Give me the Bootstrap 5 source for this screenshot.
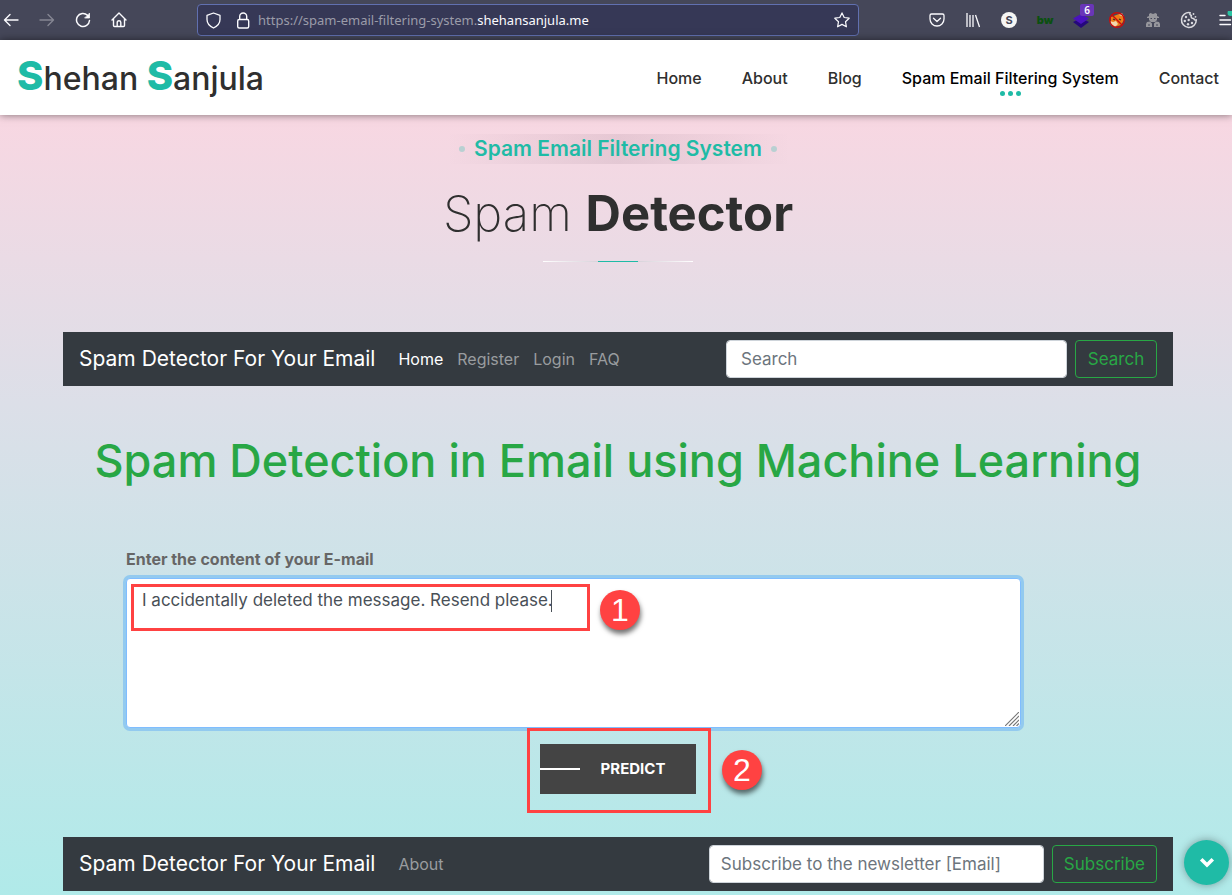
<!DOCTYPE html>
<html lang="en">
<head>
<meta charset="utf-8">
<meta name="viewport" content="width=device-width, initial-scale=1">
<title>Spam Email Filtering System</title>
<link href="https://cdn.jsdelivr.net/npm/bootstrap@5.3.0/dist/css/bootstrap.min.css" rel="stylesheet">
<style>
:root { --teal: #1fbba6; --ink: #2f2f2f; --bar: #343a40; --green: #28a745; --callout: #ff4242; }
body { font-family: Inter, "Liberation Sans", sans-serif; color: var(--ink); background: #b0eae9; overflow: hidden; }
button, input, textarea { font-family: inherit; }
a { text-decoration: none; }
.browser-bar { height: 40px; background: #454759; color: #fbfbfe; overflow: hidden; }
.browser-bar svg { display: block; flex: none; }
.tool-btn { background: none; border: 0; padding: 0; width: 36px; height: 32px; display: flex; align-items: center; justify-content: center; color: inherit; position: relative; flex: none; }
.nav-tools { width: 197px; margin-left: -7px; flex: none; }
.ext-tools { margin-right: -11px; flex: none; }
.address { width: 662px; height: 32px; margin-left: 7px; background: #363856; border: 1px solid #6170b0; border-radius: 4px; font: 13px/20px "Noto Sans", sans-serif; flex: 0 1 auto; }
.address a { color: #9b9ca9; white-space: nowrap; }
.address b { font-weight: 400; color: #fbfbfe; }
.tab-count { position: absolute; left: 17px; top: 0; width: 14px; height: 12px; border-radius: 2px; background: #6936b8; color: #fff; font: 600 10px/12px "Noto Sans", sans-serif; text-align: center; }
.site-header { position: relative; z-index: 2; height: 75px; background: #fff; box-shadow: 0 0 8px rgba(0,0,0,.5); padding: 0 13px 0 17px; }
.logo { font-size: 32px; font-weight: 500; line-height: 48px; color: var(--ink); white-space: nowrap; }
.logo b { font-size: 40px; font-weight: 800; color: var(--teal); }
.site-nav { gap: 40px; }
.site-nav a { color: var(--ink); font-size: 16px; font-weight: 500; line-height: 24px; position: relative; white-space: nowrap; }
.site-nav a.active { color: #000; }
.active-dots { position: absolute; left: 50%; bottom: -6px; margin-left: -10px; display: flex; gap: 3px; }
.active-dots i { width: 5px; height: 5px; border-radius: 50%; background: var(--teal); }
.page-main { min-height: calc(100vh - 115px); background: linear-gradient(#f8d7e2, #dcdfe8 37%, #b0eae9); padding: 19px 0 4px 4px; }
.sheet { max-width: 1110px; margin: 0 auto; }
.kicker { width: 345px; height: 30px; margin: 0 auto; color: var(--teal); font-size: 21px; font-weight: 600; line-height: 30px; background: linear-gradient(90deg, rgba(70,40,60,0), rgba(70,40,60,.09) 50%, rgba(70,40,60,0)); white-space: nowrap; gap: 9px; }
.kicker::before, .kicker::after { content: ""; width: 6px; height: 6px; border-radius: 50%; background: #b8d0d2; }
.hero-title { font-size: 49px; font-weight: 200; line-height: 56px; margin: 22px 0 19px; }
.hero-title b { font-weight: 700; }
.divider { width: 150px; height: 1px; margin: 0 auto 70px; background: linear-gradient(90deg, #fff, #d8d2da 55px, var(--teal) 55px, var(--teal) 95px, #d8d2da 95px, #fff); }
.detector-bar { background: var(--bar); padding: 8px 16px; min-height: 54px; }
.detector-bar .navbar-brand { color: #fff; font-size: 21px; line-height: 30px; padding: 4px 0; margin-right: 16px; }
.detector-bar .nav-link { color: #999c9f; font-size: 16px; line-height: 24px; padding: 7px; }
.detector-bar .nav-link.active { color: #fff; }
.detector-bar .form-control { height: 38px; font-size: 17px; line-height: 24px; padding: 6px 14px; border: 1px solid #ced4da; border-radius: 4px; }
.detector-bar .form-control::placeholder { color: #6c757d; }
.search-box { width: 341px; }
.mail-box { width: 335px; }
.detector-bar .mail-box { padding-left: 11px; }
.btn-go { min-width: 82px; height: 38px; border: 1px solid var(--green); border-radius: 4px; color: var(--green); font-size: 17px; line-height: 24px; padding: 6px 11px; }
.page-title { font-size: 45px; font-weight: 500; line-height: 54px; color: var(--green); margin: 48px 0 59px; white-space: nowrap; }
.mail-form { padding: 0 152px 0 63px; }
.mail-form label { font-size: 16px; font-weight: 700; line-height: 24px; color: #666; margin-bottom: 7px; display: block; }
.message-wrap { position: relative; }
.message { display: block; height: 150px; font-size: 17px; line-height: 24px; color: #495057; background: #fff; border: 1px solid #80bdff; border-radius: 4px; padding: 9px 15px; resize: none; box-shadow: 0 0 0 3px #93caef; }
.text-caret { position: absolute; left: 425px; top: 12px; width: 1px; height: 22px; background: #495057; }
.grip { position: absolute; right: 2px; bottom: 2px; }
.callout-box { position: absolute; border: 3px solid var(--callout); pointer-events: none; }
.callout-num { position: absolute; width: 40px; height: 40px; border-radius: 50%; background: var(--callout); color: #fff; font: 32px/40px "Liberation Sans", sans-serif; text-align: center; box-shadow: 1px 4px 5px rgba(0,0,0,.55); }
.box-text { left: 5px; top: 6px; width: 459px; height: 47px; }
.num-text { left: 474px; top: 12px; }
.predict-wrap { position: relative; width: 156px; margin: 16px auto 43px; }
.btn-predict { position: relative; width: 100%; height: 50px; border: 0; border-radius: 0; background: #444; color: #fff; font-size: 15px; font-weight: 700; padding: 0 0 0 30px; }
.btn-predict::before { content: ""; position: absolute; left: 0; top: 24px; width: 40px; height: 2px; background: #fff; }
.box-predict { left: -13px; top: -16px; width: 184px; height: 85px; }
.num-predict { left: 182px; top: 6px; }
.to-bottom { position: fixed; right: 3px; bottom: 10px; width: 45px; height: 45px; border: 0; border-radius: 50%; background: var(--teal); display: flex; align-items: center; justify-content: center; box-shadow: 0 0 8px rgba(0,0,0,.35); z-index: 3; padding: 0; }
</style>
</head>
<body>
<div class="browser-bar d-flex align-items-center">
  <div class="nav-tools d-flex">
    <button class="tool-btn" aria-label="Back"><svg width="16" height="16" viewBox="0 0 16 16" fill="none" stroke="currentColor" stroke-width="1.4" stroke-linecap="round" stroke-linejoin="round"><path d="M15 8H1.500M7 2.500 1.500 8 7 13.500"/></svg></button>
    <button class="tool-btn" aria-label="Forward"><svg width="16" height="16" viewBox="0 0 16 16" fill="none" stroke="#858692" stroke-width="1.400" stroke-linecap="round" stroke-linejoin="round"><path d="M1 8h13.500M9 2.500 14.500 8 9 13.500"/></svg></button>
    <button class="tool-btn" aria-label="Reload"><svg width="16" height="16" viewBox="0 0 16 16" fill="none" stroke="currentColor" stroke-width="1.500" stroke-linecap="round"><path d="M14.500 8.500A6.500 6.500 0 1 1 12.500 3.300"/><path d="M14.500 1.500v4.500H10z" fill="currentColor" stroke-width=".8" stroke-linejoin="round"/></svg></button>
    <button class="tool-btn" aria-label="Home"><svg width="16" height="16" viewBox="0 0 16 16" fill="none" stroke="currentColor" stroke-width="1.400" stroke-linecap="round" stroke-linejoin="round"><path d="M1 8 8 1l7 7M2.500 7v6.500a1 1 0 0 0 1 1h9a1 1 0 0 0 1-1V7M6.200 14v-3.500a1.800 1.800 0 0 1 3.600 0V14"/></svg></button>
  </div>
  <div class="address d-flex align-items-center">
    <svg class="ms-2" width="15" height="17" viewBox="0 0 15 17" fill="none" stroke="#fbfbfe" stroke-width="1.300" stroke-linejoin="round"><path d="M7.500 1 14 3.300v4.200c0 3.800-2.700 6.700-6.500 8.500C3.700 14.200 1 11.300 1 7.500V3.300z"/></svg>
    <svg class="ms-3" width="13" height="17" viewBox="2 0 13 17" fill="none" stroke="#fbfbfe" stroke-width="1.400"><rect x="2.700" y="7.500" width="11" height="8.500" rx="1.500"/><path d="M4.700 7.500V4.500a3.500 3.500 0 0 1 7 0v3"/></svg>
    <a class="ms-2" href="#">https://spam-email-filtering-system.<b>shehansanjula.me</b></a>
    <svg class="ms-auto me-2" width="16" height="16" viewBox="0 0 16 16" fill="none" stroke="#fbfbfe" stroke-width="1.200" stroke-linejoin="round"><path d="m8 .9 2.200 4.600 5 .7-3.700 3.500.9 5.100L8 12.400l-4.400 2.400.9-5.100L.8 6.200l5-.7z"/></svg>
  </div>
  <div class="ext-tools d-flex ms-auto">
    <button class="tool-btn" aria-label="Save to Pocket"><svg width="16" height="16" viewBox="0 0 16 16" fill="none" stroke="currentColor" stroke-width="1.300" stroke-linecap="round" stroke-linejoin="round"><path d="M2.500 2h11A1.500 1.500 0 0 1 15 3.500V7a7 7 0 0 1-14 0V3.500A1.500 1.500 0 0 1 2.500 2zM4.500 6.200 8 9.500l3.500-3.300"/></svg></button>
    <button class="tool-btn" aria-label="Library"><svg width="16" height="16" viewBox="0 0 16 16" stroke="currentColor" stroke-width="1.300"><path d="M2 1v14M5 3v12M8 3v12M10.500 3 14.500 15"/></svg></button>
    <button class="tool-btn" aria-label="Extension S"><svg width="18" height="18" viewBox="0 0 18 18"><circle cx="9" cy="9" r="8" fill="#f6f6f4"/><text x="9" y="13" text-anchor="middle" font-family="Inter, sans-serif" font-weight="700" font-size="11" fill="#454759">S</text></svg></button>
    <button class="tool-btn" aria-label="Extension bw"><svg width="20" height="18" viewBox="0 0 20 18"><text x="10" y="13" text-anchor="middle" font-family="Inter, sans-serif" font-weight="900" font-size="11" fill="#0b5010">bw</text></svg></button>
    <button class="tool-btn" aria-label="Stacked tabs"><svg width="18" height="18" viewBox="0 0 18 18"><path d="m1 11 8-4 8 4-8 6z" fill="#25087c"/><path d="m1 7.500 8-4.500 8 4.500L9 13z" fill="#4a13bd"/></svg><span class="tab-count">6</span></button>
    <button class="tool-btn" aria-label="Blocked extension"><svg width="18" height="18" viewBox="0 0 18 18"><path d="M3 6 11 3l4 1 1 5-3 5-6 2-4-3z" fill="#ed7d18"/><path d="m11 4 3-2 2 4zM2 10l3 1 3-1 2 3-3 3-4-2z" fill="#f3d8ad"/><path d="m5 8 2 1M11 8l2 1" stroke="#332" stroke-width="1.200"/><circle cx="9" cy="9" r="7.300" fill="none" stroke="#c90d0d" stroke-width="1.400"/><path d="m4 4 10 10" stroke="#c90d0d" stroke-width="1.400"/></svg></button>
    <button class="tool-btn" aria-label="Privacy extension"><svg width="16" height="16" viewBox="0 0 16 16" fill="#96969c"><path d="M4 4V2l1.500-1L8 2l2.500-1L12 2v2l2 1v1h-2v2l-2 2H6L4 8V6H2V5zM1 15v-3l1-2 3-.5 2 2V15zM15 15v-3l-1-2-3-.5-2 2V15z"/><path d="M5.500 6H7v1H5.500zM9 6h1.500v1H9zM3 12.500h2v1H3zm8 0h2v1h-2z" fill="#454759"/></svg></button>
    <button class="tool-btn" aria-label="Cookies"><svg width="18" height="18" viewBox="0 0 18 18" fill="none" stroke="#d9d9de" stroke-width="1.500"><path d="M10 1.700A7.400 7.400 0 1 0 16.300 9c-1.300.3-2.300-.2-2.500-1.500-2 0-3.300-1.300-2.500-3C10 4 9.600 3 10 1.700z"/><g fill="#d9d9de" stroke="none"><circle cx="6" cy="6" r="1.200"/><circle cx="4.800" cy="10" r="1.200"/><circle cx="8.700" cy="9" r="1.200"/><circle cx="8" cy="13.300" r="1.200"/><circle cx="12" cy="12" r="1.200"/><circle cx="13.500" cy="3" r=".9"/><circle cx="15.500" cy="5.800" r=".9"/></g></svg></button>
    <button class="tool-btn" aria-label="Menu"><svg width="16" height="18" viewBox="0 0 16 18" stroke="currentColor" stroke-width="1.400" stroke-linecap="round"><path d="M3 4.500h5M3 9h10.500M3 13.500h10.500"/><circle cx="13.500" cy="2" r="3" fill="#2ac3a2" stroke="none"/></svg></button>
  </div>
</div>

<header class="site-header d-flex align-items-center justify-content-between">
  <a class="logo" href="#"><b>S</b>hehan <b>S</b>anjula</a>
  <nav class="site-nav d-flex">
    <a href="#">Home</a>
    <a href="#">About</a>
    <a href="#">Blog</a>
    <a class="active" href="#" aria-current="page">Spam Email Filtering System<span class="active-dots"><i></i><i></i><i></i></span></a>
    <a href="#">Contact</a>
  </nav>
</header>

<main class="page-main">
  <div class="sheet">
    <div class="kicker d-flex align-items-center justify-content-center">Spam Email Filtering System</div>
    <h1 class="hero-title text-center">Spam <b>Detector</b></h1>
    <div class="divider"></div>

    <nav class="detector-bar d-flex align-items-center">
      <a class="navbar-brand" href="#">Spam Detector For Your Email</a>
      <div class="d-flex">
        <a class="nav-link active" href="#">Home</a>
        <a class="nav-link" href="#">Register</a>
        <a class="nav-link" href="#">Login</a>
        <a class="nav-link" href="#">FAQ</a>
      </div>
      <form class="d-flex gap-2 ms-auto">
        <input class="form-control search-box" type="search" placeholder="Search" aria-label="Search">
        <button class="btn btn-go" type="button">Search</button>
      </form>
    </nav>

    <h2 class="page-title text-center">Spam Detection in Email using Machine Learning</h2>

    <form>
      <div class="mail-form">
        <label for="message">Enter the content of your E-mail</label>
        <div class="message-wrap">
          <textarea class="form-control message" id="message">I accidentally deleted the message. Resend please.</textarea>
          <span class="text-caret"></span>
          <svg class="grip" width="14" height="14" viewBox="0 0 14 14" stroke="#777" stroke-width="1.200"><path d="M0 14 14 0M4 14 14 4M8 14l6-6M11.500 14l2.500-2.500"/></svg>
          <span class="callout-box box-text"></span>
          <span class="callout-num num-text">1</span>
        </div>
      </div>
      <div class="predict-wrap">
        <button class="btn btn-predict" type="button">PREDICT</button>
        <span class="callout-box box-predict"></span>
        <span class="callout-num num-predict">2</span>
      </div>
    </form>

    <footer class="detector-bar d-flex align-items-center">
      <a class="navbar-brand" href="#">Spam Detector For Your Email</a>
      <a class="nav-link" href="#">About</a>
      <form class="d-flex gap-2 ms-auto">
        <input class="form-control mail-box" type="email" placeholder="Subscribe to the newsletter [Email]" aria-label="Email">
        <button class="btn btn-go" type="button">Subscribe</button>
      </form>
    </footer>
  </div>
</main>

<button class="to-bottom" aria-label="Scroll down"><svg width="16" height="12" viewBox="0 0 16 12" fill="none" stroke="#fff" stroke-width="3.600" stroke-linecap="square"><path d="m3.500 3.500 4.500 4.500 4.500-4.500"/></svg></button>
<script src="https://cdn.jsdelivr.net/npm/bootstrap@5.3.0/dist/js/bootstrap.bundle.min.js"></script>
</body>
</html>
